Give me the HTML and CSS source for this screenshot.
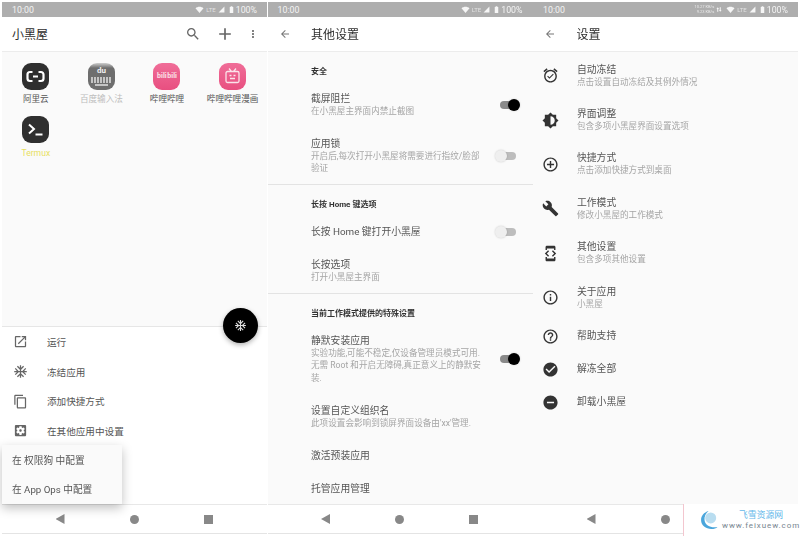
FILE: index.html
```html
<!DOCTYPE html>
<html lang="zh-CN">
<head>
<meta charset="utf-8">
<title>小黑屋</title>
<link rel="stylesheet" href="styles.css">
</head>
<body>
<svg class="defs" aria-hidden="true">
  <symbol id="i-wifi" viewBox="0 0 24 24"><path d="M12 21L0 7c3.500-3 7.500-4.500 12-4.500S20.500 4 24 7z"/></symbol>
  <symbol id="i-signal" viewBox="0 0 24 24"><path d="M2 22L22 2v20z"/></symbol>
  <symbol id="i-battery" viewBox="0 0 24 24"><path d="M9 1h6v2h3v21H6V3h3z"/></symbol>
  <symbol id="i-back" viewBox="0 0 24 24"><path d="M20 11H7.830l5.590-5.590L12 4l-8 8 8 8 1.410-1.410L7.830 13H20z"/></symbol>
  <symbol id="i-snow" viewBox="0 0 24 24"><path d="M22 11h-4.170l3.240-3.240-1.410-1.420L15 11h-2V9l4.660-4.660-1.420-1.410L13 6.170V2h-2v4.170L7.760 2.930 6.340 4.340 11 9v2H9L4.340 6.340 2.930 7.760 6.170 11H2v2h4.170l-3.240 3.240 1.410 1.420L9 13h2v2l-4.660 4.660 1.420 1.410L11 17.830V22h2v-4.170l3.240 3.240 1.420-1.410L13 15v-2h2l4.660 4.660 1.410-1.420L17.830 13H22z"/></symbol>
</svg>

<main class="screens">

  <section class="phone">
    <div class="status">
      <span class="clock">10:00</span>
      <span class="status-right">
        <svg class="st-wifi"><use href="#i-wifi"/></svg><span class="lte">LTE</span><svg class="st-signal"><use href="#i-signal"/></svg><svg class="st-batt"><use href="#i-battery"/></svg><span class="pct">100%</span>
      </span>
    </div>
    <header class="toolbar">
      <h1 class="title title-home">小黑屋</h1>
      <span class="tool-actions">
        <svg class="tool tool-search" viewBox="0 0 24 24"><path d="M15.500 14h-.790l-.280-.270C15.410 12.590 16 11.110 16 9.500 16 5.910 13.090 3 9.500 3S3 5.910 3 9.500 5.910 16 9.500 16c1.610 0 3.090-.590 4.230-1.570l.270.280v.790l5 4.990L20.490 19l-4.990-5zm-6 0C7.010 14 5 11.990 5 9.500S7.010 5 9.500 5 14 7.010 14 9.500 11.990 14 9.500 14z"/></svg>
        <svg class="tool tool-add" viewBox="0 0 24 24"><path d="M19 13h-6v6h-2v-6H5v-2h6V5h2v6h6z"/></svg>
        <svg class="tool tool-more" viewBox="0 0 24 24"><path d="M12 8c1.100 0 2-.9 2-2s-.9-2-2-2-2 .9-2 2 .9 2 2 2zm0 2c-1.100 0-2 .9-2 2s.9 2 2 2 2-.9 2-2-.9-2-2-2zm0 6c-1.100 0-2 .9-2 2s.9 2 2 2 2-.9 2-2-.9-2-2-2z"/></svg>
      </span>
    </header>
    <div class="content home">
      <div class="apps">
        <div class="app">
          <span class="app-icon dark">
            <svg class="glyph" viewBox="0 0 27 27"><path class="ali" d="M10.500 9H8a2.500 2.500 0 0 0-2.500 2.500v4A2.500 2.500 0 0 0 8 18h2.500M16.500 9H19a2.500 2.500 0 0 1 2.500 2.500v4A2.500 2.500 0 0 1 19 18h-2.500M11 13.500h5"/></svg>
          </span>
          <span class="app-name">阿里云</span>
        </div>
        <div class="app">
          <span class="app-icon baidu">
            <span class="du">du</span>
            <span class="keys"></span>
            <span class="spacebar"></span>
          </span>
          <span class="app-name muted">百度输入法</span>
        </div>
        <div class="app">
          <span class="app-icon pink"><span class="bili">bili bili</span></span>
          <span class="app-name">哔哩哔哩</span>
        </div>
        <div class="app">
          <span class="app-icon pink">
            <svg class="glyph" viewBox="0 0 27 27"><path class="tv" d="M10 5.500l2.500 3M17 5.500l-2.500 3M8.500 8.500h10a1.500 1.500 0 0 1 1.500 1.500v8a1.500 1.500 0 0 1-1.500 1.500h-10A1.500 1.500 0 0 1 7 18v-8a1.500 1.500 0 0 1 1.500-1.500zM10.500 12.500h2M14.500 12.500h2M11 15.500h5"/></svg>
          </span>
          <span class="app-name">哔哩哔哩漫画</span>
        </div>
        <div class="app">
          <span class="app-icon dark">
            <svg class="glyph" viewBox="0 0 27 27"><path class="term" d="M7 8.500l5 4.500-5 4.500M13.500 18.500h7"/></svg>
          </span>
          <span class="app-name termux">Termux</span>
        </div>
      </div>
      <div class="sheet">
        <button class="fab" type="button" aria-label="冻结"><svg class="fab-icon"><use href="#i-snow"/></svg></button>
        <div class="sheet-row">
          <svg class="sheet-icon" viewBox="0 0 24 24"><path d="M19 19H5V5h7V3H5c-1.110 0-2 .9-2 2v14c0 1.100.89 2 2 2h14c1.100 0 2-.9 2-2v-7h-2v7zM14 3v2h3.590l-9.830 9.830 1.410 1.410L19 6.410V10h2V3h-7z"/></svg>
          <span>运行</span>
        </div>
        <div class="sheet-row">
          <svg class="sheet-icon"><use href="#i-snow"/></svg>
          <span>冻结应用</span>
        </div>
        <div class="sheet-row">
          <svg class="sheet-icon" viewBox="0 0 24 24"><path d="M16 1H4c-1.100 0-2 .9-2 2v14h2V3h12V1zm3 4H8c-1.100 0-2 .9-2 2v14c0 1.100.9 2 2 2h11c1.100 0 2-.9 2-2V7c0-1.100-.9-2-2-2zm0 16H8V7h11v14z"/></svg>
          <span>添加快捷方式</span>
        </div>
        <div class="sheet-row">
          <svg class="sheet-icon" viewBox="0 0 24 24"><path d="M12 10c-1.100 0-2 .9-2 2s.9 2 2 2 2-.9 2-2-.9-2-2-2zm7-7H5c-1.110 0-2 .9-2 2v14c0 1.100.89 2 2 2h14c1.110 0 2-.9 2-2V5c0-1.100-.89-2-2-2zm-1.750 9c0 .23-.02.46-.05.68l1.480 1.160c.13.11.17.3.08.45l-1.400 2.420c-.09.15-.27.21-.43.15l-1.740-.7c-.36.28-.76.51-1.180.69l-.26 1.850c-.03.17-.18.3-.35.3h-2.800c-.17 0-.32-.13-.35-.29l-.26-1.850c-.43-.18-.82-.41-1.180-.69l-1.740.7c-.16.06-.34 0-.43-.15l-1.400-2.420c-.09-.15-.05-.34.08-.45l1.480-1.160c-.03-.23-.05-.46-.05-.69 0-.23.02-.46.05-.68l-1.480-1.160c-.13-.11-.17-.3-.08-.45l1.400-2.420c.09-.15.27-.21.43-.15l1.740.7c.36-.28.76-.51 1.180-.69l.26-1.850c.03-.17.18-.3.35-.3h2.800c.17 0 .32.13.35.29l.26 1.850c.43.18.82.41 1.180.69l1.740-.7c.16-.06.34 0 .43.15l1.400 2.420c.09.15.05.34-.08.45l-1.480 1.160c.03.23.05.46.05.69z"/></svg>
          <span>在其他应用中设置</span>
        </div>
      </div>
      <div class="popup">
        <div class="popup-row">在 权限狗 中配置</div>
        <div class="popup-row">在 App Ops 中配置</div>
      </div>
    </div>
    <nav class="navbar"><span class="nav-back"></span><span class="nav-home"></span><span class="nav-recent"></span></nav>
  </section>

  <section class="phone">
    <div class="status">
      <span class="clock">10:00</span>
      <span class="status-right">
        <svg class="st-wifi"><use href="#i-wifi"/></svg><span class="lte">LTE</span><svg class="st-signal"><use href="#i-signal"/></svg><svg class="st-batt"><use href="#i-battery"/></svg><span class="pct">100%</span>
      </span>
    </div>
    <header class="toolbar">
      <svg class="back"><use href="#i-back"/></svg>
      <h1 class="title">其他设置</h1>
    </header>
    <div class="content prefs">
      <h2 class="pref-head">安全</h2>
      <div class="pref">
        <div class="pref-text"><p class="pref-title">截屏阻拦</p><p class="pref-sub">在小黑屋主界面内禁止截图</p></div>
        <span class="switch on"></span>
      </div>
      <div class="pref">
        <div class="pref-text"><p class="pref-title">应用锁</p><p class="pref-sub">开启后,每次打开小黑屋将需要进行指纹/脸部<br>验证</p></div>
        <span class="switch"></span>
      </div>
      <hr class="rule">
      <h2 class="pref-head">长按 Home 键选项</h2>
      <div class="pref">
        <div class="pref-text"><p class="pref-title">长按 Home 键打开小黑屋</p></div>
        <span class="switch"></span>
      </div>
      <div class="pref">
        <div class="pref-text"><p class="pref-title">长按选项</p><p class="pref-sub">打开小黑屋主界面</p></div>
      </div>
      <hr class="rule">
      <h2 class="pref-head">当前工作模式提供的特殊设置</h2>
      <div class="pref">
        <div class="pref-text"><p class="pref-title">静默安装应用</p><p class="pref-sub multi">实验功能,可能不稳定,仅设备管理员模式可用.<br>无需 Root 和开启无障碍,真正意义上的静默安<br>装.</p></div>
        <span class="switch on"></span>
      </div>
      <div class="pref">
        <div class="pref-text wide"><p class="pref-title">设置自定义组织名</p><p class="pref-sub">此项设置会影响到锁屏界面设备由'xx'管理.</p></div>
      </div>
      <div class="pref">
        <div class="pref-text"><p class="pref-title">激活预装应用</p></div>
      </div>
      <div class="pref">
        <div class="pref-text"><p class="pref-title">托管应用管理</p></div>
      </div>
    </div>
    <nav class="navbar"><span class="nav-back"></span><span class="nav-home"></span><span class="nav-recent"></span></nav>
  </section>

  <section class="phone">
    <div class="status">
      <span class="clock">10:00</span>
      <span class="status-right">
        <span class="speed">10.27 KB/s<br>9.23 KB/s</span><svg class="st-updown" viewBox="0 0 24 24"><path d="M7 3l5 7H9v11H5V10H2zM17 21l-5-7h3V3h4v11h3z"/></svg><svg class="st-wifi"><use href="#i-wifi"/></svg><span class="lte">LTE</span><svg class="st-signal"><use href="#i-signal"/></svg><svg class="st-batt"><use href="#i-battery"/></svg><span class="pct">100%</span>
      </span>
    </div>
    <header class="toolbar">
      <svg class="back"><use href="#i-back"/></svg>
      <h1 class="title">设置</h1>
    </header>
    <div class="content settings">
      <div class="setting tall">
        <svg class="set-icon" viewBox="0 0 24 24"><path d="M22 5.720l-4.600-3.860-1.290 1.530 4.600 3.860L22 5.720zM7.880 3.390L6.600 1.860 2 5.710l1.290 1.530 4.590-3.850zM12 4c-4.970 0-9 4.030-9 9s4.020 9 9 9c4.970 0 9-4.030 9-9s-4.030-9-9-9zm0 16c-3.860 0-7-3.140-7-7s3.140-7 7-7 7 3.140 7 7-3.140 7-7 7zm-1.460-5.470L8.410 12.400l-1.060 1.060 3.180 3.180 6-6-1.060-1.060-4.930 4.950z"/></svg>
        <div><p class="pref-title">自动冻结</p><p class="pref-sub">点击设置自动冻结及其例外情况</p></div>
      </div>
      <div class="setting tall">
        <svg class="set-icon" viewBox="0 0 24 24"><path d="M20 15.310L23.310 12 20 8.690V4h-4.690L12 .69 8.690 4H4v4.690L.69 12 4 15.310V20h4.690L12 23.310 15.310 20H20v-4.690zM12 18V6c3.310 0 6 2.690 6 6s-2.690 6-6 6z"/></svg>
        <div><p class="pref-title">界面调整</p><p class="pref-sub">包含多项小黑屋界面设置选项</p></div>
      </div>
      <div class="setting tall">
        <svg class="set-icon" viewBox="0 0 24 24"><path d="M13 7h-2v4H7v2h4v4h2v-4h4v-2h-4V7zm-1-5C6.480 2 2 6.480 2 12s4.480 10 10 10 10-4.480 10-10S17.520 2 12 2zm0 18c-4.410 0-8-3.590-8-8s3.590-8 8-8 8 3.590 8 8-3.590 8-8 8z"/></svg>
        <div><p class="pref-title">快捷方式</p><p class="pref-sub">点击添加快捷方式到桌面</p></div>
      </div>
      <div class="setting tall">
        <svg class="set-icon" viewBox="0 0 24 24"><path d="M22.700 19l-9.100-9.100c.9-2.300.4-5-1.500-6.900-2-2-5-2.400-7.400-1.300L9 6 6 9 1.600 4.700C.4 7.100.9 10.100 2.900 12.100c1.900 1.900 4.600 2.400 6.900 1.500l9.100 9.100c.4.4 1 .4 1.400 0l2.300-2.300c.5-.4.5-1.100.1-1.400z"/></svg>
        <div><p class="pref-title">工作模式</p><p class="pref-sub">修改小黑屋的工作模式</p></div>
      </div>
      <div class="setting tall">
        <svg class="set-icon" viewBox="0 0 24 24"><path d="M7 5h10v2h2V3c0-1.100-.9-1.990-2-1.990L7 1c-1.100 0-2 .9-2 2v4h2V5zm8.410 11.590L20 12l-4.590-4.590L14 8.830 17.170 12 14 15.170l1.410 1.420zM10 15.170L6.830 12 10 8.830 8.590 7.410 4 12l4.590 4.590L10 15.170zM17 19H7v-2H5v4c0 1.100.9 2 2 2h10c1.100 0 2-.9 2-2v-4h-2v2z"/></svg>
        <div><p class="pref-title">其他设置</p><p class="pref-sub">包含多项其他设置</p></div>
      </div>
      <div class="setting tall">
        <svg class="set-icon" viewBox="0 0 24 24"><path d="M11 17h2v-6h-2v6zm1-15C6.480 2 2 6.480 2 12s4.480 10 10 10 10-4.480 10-10S17.520 2 12 2zm0 18c-4.410 0-8-3.590-8-8s3.590-8 8-8 8 3.590 8 8-3.590 8-8 8zM11 9h2V7h-2v2z"/></svg>
        <div><p class="pref-title">关于应用</p><p class="pref-sub">小黑屋</p></div>
      </div>
      <div class="setting">
        <svg class="set-icon" viewBox="0 0 24 24"><path d="M11 18h2v-2h-2v2zm1-16C6.480 2 2 6.480 2 12s4.480 10 10 10 10-4.480 10-10S17.520 2 12 2zm0 18c-4.410 0-8-3.590-8-8s3.590-8 8-8 8 3.590 8 8-3.590 8-8 8zm0-14c-2.210 0-4 1.790-4 4h2c0-1.100.9-2 2-2s2 .9 2 2c0 2-3 1.750-3 5h2c0-2.250 3-2.500 3-5 0-2.210-1.790-4-4-4z"/></svg>
        <p class="pref-title">帮助支持</p>
      </div>
      <div class="setting">
        <svg class="set-icon" viewBox="0 0 24 24"><path d="M12 2C6.480 2 2 6.480 2 12s4.480 10 10 10 10-4.480 10-10S17.520 2 12 2zm-2 15l-5-5 1.410-1.410L10 14.170l7.590-7.590L19 8l-9 9z"/></svg>
        <p class="pref-title">解冻全部</p>
      </div>
      <div class="setting">
        <svg class="set-icon" viewBox="0 0 24 24"><path d="M12 2C6.480 2 2 6.480 2 12s4.480 10 10 10 10-4.480 10-10S17.520 2 12 2zm5 11H7v-2h10v2z"/></svg>
        <p class="pref-title">卸载小黑屋</p>
      </div>
    </div>
    <nav class="navbar"><span class="nav-back"></span><span class="nav-home"></span><span class="nav-recent"></span></nav>
  </section>

</main>

<aside class="watermark">
  <svg class="wm-logo" viewBox="0 0 32 32"><path class="wm-arc" d="M14 3C7 5 3 10 3 16c0 8 7 13 15 13 4 0 7-1 9-3-8 2-18-1-19-10-.6-5 2-10 6-13z"/><circle class="wm-disc" cx="17" cy="13" r="8"/></svg>
  <div class="wm-text"><span class="wm-cn">飞雪资源网</span><span class="wm-url">www.feixuew.com</span></div>
</aside>
</body>
</html>
```
FILE: styles.css
```css
* { box-sizing: border-box; }
html, body { margin: 0; padding: 0; }
body {
  width: 800px;
  height: 536px;
  overflow: hidden;
  background: #fff;
  font-family: "Roboto", "Noto Sans CJK SC", sans-serif;
  color: #444;
  position: relative;
}
p, h1, h2 { margin: 0; font-weight: 400; }
.defs { position: absolute; width: 0; height: 0; }

.screens {
  display: flex;
  padding: 2px 0 0 2px;
  filter: blur(0.45px);
}
.phone {
  width: 265px;
  height: 532px;
  display: flex;
  flex-direction: column;
  position: relative;
}
.phone + .phone { margin-left: .5px; }

/* status bar */
.status {
  height: 15px;
  flex: none;
  background: #aeaeae;
  color: #f4f4f4;
  display: flex;
  align-items: center;
  justify-content: space-between;
  padding: 0 10px;
  font-size: 8.800px;
}
.status-right { display: flex; align-items: center; }
.status svg { fill: #f6f6f6; display: block; }
.st-wifi { width: 9px; height: 8px; margin-right: 2px; }
.lte { font-size: 6px; opacity: .75; }
.st-signal { width: 7px; height: 7px; margin: 0 3px 0 2px; }
.st-batt { width: 7px; height: 9px; margin-right: 1px; }
.speed { font-size: 4px; line-height: 4.500px; text-align: right; opacity: .85; margin-right: 2px; }
.st-updown { width: 6px; height: 7px; margin-right: 4px; }

/* toolbar */
.toolbar {
  height: 35px;
  flex: none;
  background: #fff;
  border-bottom: 1px solid #ececec;
  display: flex;
  align-items: center;
  padding-left: 11px;
}
.title { font-size: 12px; line-height: 14px; color: #2e2e2e; padding-top: 1px; }
.title-home { margin-left: -1px; flex: 1; }
.back { width: 12px; height: 12px; fill: #777; margin-right: 20.500px; }
.tool-actions { display: flex; align-items: center; }
.tool { display: block; fill: #666; }
.tool-search { width: 16px; height: 16px; margin-right: 14px; }
.tool-add { width: 20px; height: 20px; margin-right: 12px; }
.tool-more { width: 12px; height: 12px; margin-right: 8px; }

/* content */
.content { flex: 1; min-height: 0; background: #fafafa; position: relative; display: flex; flex-direction: column; }

/* home */
.apps {
  flex: 1;
  display: grid;
  grid-template-columns: repeat(4, 65.600px);
  grid-auto-rows: 42.500px;
  row-gap: 11px;
  align-content: start;
  padding: 10.500px 0 0 1px;
}
.app { display: flex; flex-direction: column; align-items: center; }
.app-icon {
  width: 27px;
  height: 27px;
  border-radius: 9px;
  display: flex;
  align-items: center;
  justify-content: center;
  flex: none;
  overflow: hidden;
}
.app-name { font-size: 8.600px; line-height: 12px; margin-top: 3.500px; color: #555; white-space: nowrap; }
.app-name.muted { color: #bdbdbd; }
.app-name.termux { color: #e8df62; }
.dark { background: #2f2f2f; }
.pink { background: linear-gradient(#f06d98, #e84f80); }
.baidu { background: linear-gradient(#cfcfcf 0, #6e6e6e 5px); flex-direction: column; justify-content: flex-start; }
.du { font-size: 8px; line-height: 9px; font-weight: 700; color: #f2f2f2; margin-top: 3px; }
.keys {
  width: 21px;
  height: 6px;
  margin-top: 2px;
  background: repeating-linear-gradient(90deg, #c4c4c4 0 2px, transparent 2px 3px);
}
.spacebar { width: 13px; height: 2px; margin-top: 1px; background: #c4c4c4; }
.glyph { width: 27px; height: 27px; display: block; fill: none; }
.ali { stroke: #fff; stroke-width: 2.200; }
.tv { stroke: #fbe3ea; stroke-width: 1.300; }
.term { stroke: #fff; stroke-width: 2; }
.bili { font-size: 7px; font-weight: 700; color: #fbe3ea; white-space: nowrap; word-spacing: -1px; }

.sheet {
  height: 178px;
  flex: none;
  background: #fff;
  border-top: 1px solid #e6e6e6;
  position: relative;
}
.sheet-row {
  height: 29.700px;
  display: flex;
  align-items: center;
  padding-left: 11px;
  font-size: 9.600px;
  color: #555;
}
.sheet-icon { width: 15px; height: 15px; fill: #666; margin-right: 19px; flex: none; }
.fab {
  position: absolute;
  right: 9px;
  top: -19px;
  width: 35px;
  height: 35px;
  border: 0;
  padding: 0;
  border-radius: 50%;
  background: #000;
  box-shadow: 0 2px 5px rgba(0,0,0,.3);
  display: flex;
  align-items: center;
  justify-content: center;
}
.fab-icon { width: 13px; height: 13px; fill: #ddd; }
.popup {
  position: absolute;
  left: 0;
  bottom: 0;
  width: 120px;
  height: 59px;
  background: #fafafa;
  box-shadow: 0 4px 10px rgba(0,0,0,.25);
  z-index: 2;
}
.popup-row {
  height: 29.500px;
  display: flex;
  align-items: center;
  padding-left: 10px;
  font-size: 9.700px;
  color: #555;
  white-space: pre;
}

/* other settings */
.prefs { padding-left: 43.500px; overflow: hidden; }
.prefs > * { flex: none; }
.pref-head {
  font-size: 8px;
  line-height: 12px;
  font-weight: 700;
  color: #333;
  padding: 14px 0 4.500px;
  margin: 0;
}
.pref {
  display: flex;
  align-items: center;
  padding: 10.500px 0;
}
.pref-text { width: 180px; flex: none; white-space: nowrap; }
.pref-text.wide { width: 210px; }
.pref-title { font-size: 9.800px; line-height: 12px; color: #555; white-space: nowrap; }
.pref-sub { font-size: 8.600px; line-height: 12px; color: #a5a5a5; white-space: nowrap; }
.pref-sub.multi { line-height: 12.300px; }
.rule { height: 1px; border: 0; background: #e3e3e3; margin: -.5px 0 0 -43.500px; align-self: stretch; }
.switch {
  width: 26px;
  height: 12px;
  margin-left: 4px;
  position: relative;
  flex: none;
}
.switch::before {
  content: "";
  position: absolute;
  left: 5px;
  right: 5px;
  top: 2px;
  height: 8px;
  border-radius: 4px;
  background: #bdbdbd;
}
.switch::after {
  content: "";
  position: absolute;
  left: 0;
  top: 0;
  width: 12px;
  height: 12px;
  border-radius: 50%;
  background: #efefef;
  box-shadow: 0 0 2px rgba(0,0,0,.2);
}
.switch.on::before { background: #8a8a8a; }
.switch.on::after { left: 13px; background: #000; }

/* settings */
.settings { padding-top: 1.500px; }
.setting {
  height: 33px;
  display: flex;
  align-items: center;
  padding-left: 9px;
}
.setting.tall { height: 44.400px; }
.set-icon { width: 17px; height: 17px; fill: #333; margin-right: 18px; flex: none; }

/* nav bar */
.navbar {
  height: 30px;
  flex: none;
  background: #fff;
  border-top: 1px solid #e8e8e8;
  border-bottom: 1px solid #e4e4e4;
  display: flex;
  align-items: center;
  padding-left: 53.500px;
  gap: 65px;
}
.nav-back {
  width: 9px;
  height: 10px;
  background: #888;
  clip-path: polygon(0 50%, 100% 0, 100% 100%);
}
.nav-home { width: 9px; height: 9px; border-radius: 50%; background: #888; }
.nav-recent { width: 9px; height: 9px; background: #888; }

/* watermark */
.watermark {
  position: absolute;
  left: 683px;
  top: 504px;
  width: 117px;
  height: 32px;
  background: #fff;
  display: flex;
  align-items: center;
  padding-left: 15px;
  border-left: 1px solid #f3c6cf;
}
.wm-logo { width: 22px; height: 24px; flex: none; }
.wm-arc { fill: #4aa6dc; }
.wm-disc { fill: #b9ddf0; }
.wm-text { display: flex; flex-direction: column; align-items: center; margin-left: 1px; }
.wm-cn { font-size: 8.800px; line-height: 12px; color: #63b8ea; }
.wm-url { font-size: 8px; line-height: 10px; color: #77858f; letter-spacing: .9px; white-space: nowrap; }
```
